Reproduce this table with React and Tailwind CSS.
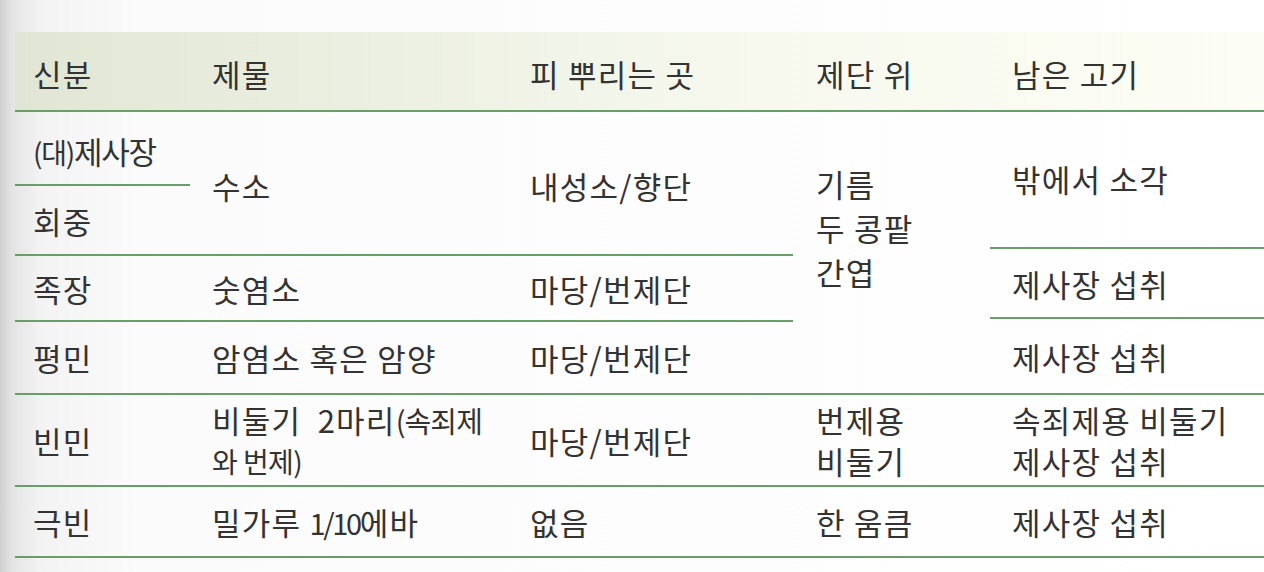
import React from "react";

const line = "border-b-2 border-[#6a9d6a]";

function Cell({ className = "", children }) {
  return <div className={`flex items-center ${className}`}>{children}</div>;
}

export default function App() {
  return (
    <div
      className="w-[1264px] h-[572px] overflow-hidden pt-[32px] text-[#333333] bg-[linear-gradient(to_right,#cfcfcf_0px,#e4e4e4_12px,#f3f3f3_40px,#fbfbfb_140px,#ffffff_100%)]"
      style={{ fontFamily: '"Noto Sans CJK KR", "Noto Sans", sans-serif' }}
    >
      <div className="ml-[15px] w-[1249px] text-[31px] leading-none tracking-[0.04em]">
        {/* header */}
        <div className={`flex h-[80px] ${line} bg-[linear-gradient(to_right,#e1e6d4_0%,#ecf0e2_30%,#f7f9ef_60%,#fcfdf4_100%)]`}>
          <div className="w-[175px] pl-[18px] pt-[4px] flex items-center">신분</div>
          <div className="w-[320px] pl-[22px] pt-[4px] flex items-center">제물</div>
          <div className="w-[283px] pl-[20px] pt-[4px] flex items-center">피 뿌리는 곳</div>
          <div className="w-[197px] pl-[23px] pt-[4px] flex items-center">제단 위</div>
          <div className="w-[274px] pl-[22px] pt-[4px] flex items-center">남은 고기</div>
        </div>

        {/* body */}
        <div className="grid grid-cols-[175px_320px_283px_197px_274px] grid-rows-[74px_70px_66px_73px_92px_71px]">
          {/* rows 1-2 */}
          <Cell className={`col-start-1 row-start-1 pl-[18px] pt-[4px] ${line}`}>
            <span className="tracking-[-0.04em]">
              <span className="text-[28px]">(대)</span>제사장
            </span>
          </Cell>
          <Cell className={`col-start-1 row-start-2 pl-[18px] ${line}`}>회중</Cell>
          <Cell className={`col-start-2 row-start-1 row-span-2 pl-[22px] pt-[4px] ${line}`}>수소</Cell>
          <Cell className={`col-start-3 row-start-1 row-span-2 pl-[20px] pt-[4px] ${line}`}>내성소/향단</Cell>
          <div className={`col-start-4 row-start-1 row-span-4 pl-[23px] pt-[50px] ${line} flex flex-col leading-[44px]`}>
            <span>기름</span>
            <span>두 콩팥</span>
            <span>간엽</span>
          </div>
          <div className="col-start-5 row-start-1 row-span-4 flex flex-col">
            <Cell className={`h-[137px] pl-[22px] pb-[2px] ${line}`}>밖에서 소각</Cell>
            <Cell className={`h-[70px] pl-[22px] ${line}`}>제사장 섭취</Cell>
            <Cell className={`h-[76px] pl-[22px] ${line}`}>제사장 섭취</Cell>
          </div>

          {/* row 3 */}
          <Cell className={`col-start-1 row-start-3 pl-[18px] ${line}`}>족장</Cell>
          <Cell className={`col-start-2 row-start-3 pl-[22px] ${line}`}>숫염소</Cell>
          <Cell className={`col-start-3 row-start-3 pl-[20px] ${line}`}>마당/번제단</Cell>

          {/* row 4 */}
          <Cell className={`col-start-1 row-start-4 pl-[18px] ${line}`}>평민</Cell>
          <Cell className={`col-start-2 row-start-4 pl-[22px] ${line}`}>암염소 혹은 암양</Cell>
          <Cell className={`col-start-3 row-start-4 pl-[20px] ${line}`}>마당/번제단</Cell>

          {/* row 5 */}
          <Cell className={`col-start-1 row-start-5 pl-[18px] ${line}`}>빈민</Cell>
          <div className={`col-start-2 row-start-5 pl-[22px] ${line} flex flex-col justify-center leading-[41px]`}>
            <span className="whitespace-nowrap">
              비둘기&nbsp; 2마리<span className="text-[29px] tracking-[-0.03em]">(속죄제</span>
            </span>
            <span className="text-[28px] tracking-[-0.02em]">와 번제)</span>
          </div>
          <Cell className={`col-start-3 row-start-5 pl-[20px] ${line}`}>마당/번제단</Cell>
          <div className={`col-start-4 row-start-5 pl-[23px] ${line} flex flex-col justify-center leading-[41px]`}>
            <span>번제용</span>
            <span>비둘기</span>
          </div>
          <div className={`col-start-5 row-start-5 pl-[22px] ${line} flex flex-col justify-center leading-[41px]`}>
            <span>속죄제용 비둘기</span>
            <span>제사장 섭취</span>
          </div>

          {/* row 6 */}
          <Cell className={`col-start-1 row-start-6 pl-[18px] ${line}`}>극빈</Cell>
          <Cell className={`col-start-2 row-start-6 pl-[22px] ${line}`}>
            <span className="whitespace-nowrap">
              밀가루 <span className="text-[29px] tracking-[-0.08em]">1/10</span>에바
            </span>
          </Cell>
          <Cell className={`col-start-3 row-start-6 pl-[20px] ${line}`}>없음</Cell>
          <Cell className={`col-start-4 row-start-6 pl-[23px] ${line}`}>한 움큼</Cell>
          <Cell className={`col-start-5 row-start-6 pl-[22px] ${line}`}>제사장 섭취</Cell>
        </div>
      </div>
    </div>
  );
}
